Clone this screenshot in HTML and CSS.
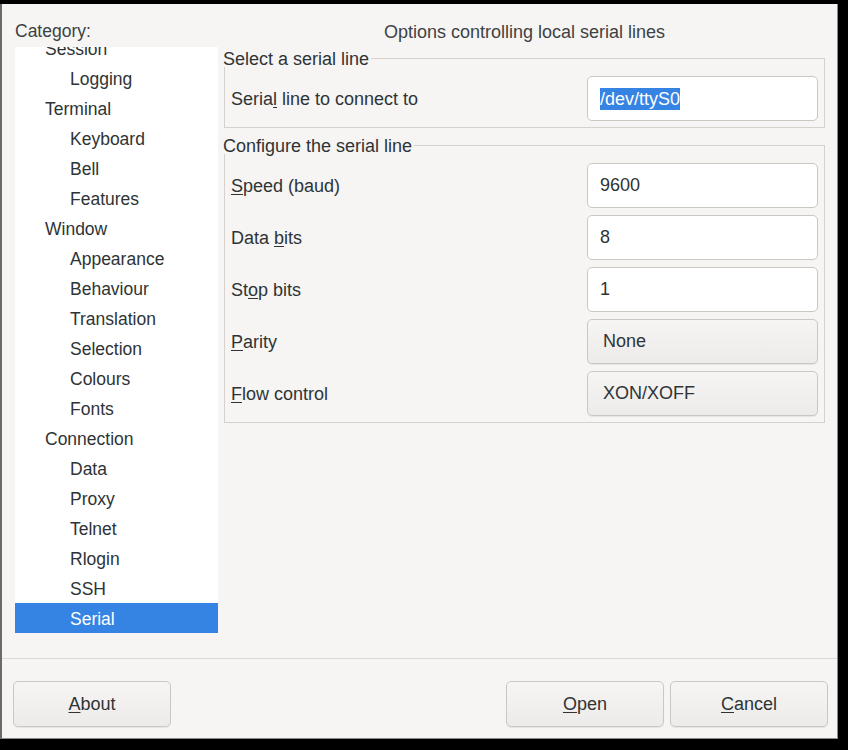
FILE: index.html
```html
<!DOCTYPE html>
<html>
  <head>
    <title>PuTTY Configuration - Serial</title>
    <link rel="stylesheet" href="styles.css">
  </head>

  <body>
    <div class="window">
      <div class="main">
        <div class="sidebar">
          <div class="cat-label">Category:</div>
          <div class="tree">
            <div class="tree-inner">
              <div class="node">Session</div>
              <div class="node sub">Logging</div>
              <div class="node">Terminal</div>
              <div class="node sub">Keyboard</div>
              <div class="node sub">Bell</div>
              <div class="node sub">Features</div>
              <div class="node">Window</div>
              <div class="node sub">Appearance</div>
              <div class="node sub">Behaviour</div>
              <div class="node sub">Translation</div>
              <div class="node sub">Selection</div>
              <div class="node sub">Colours</div>
              <div class="node sub">Fonts</div>
              <div class="node">Connection</div>
              <div class="node sub">Data</div>
              <div class="node sub">Proxy</div>
              <div class="node sub">Telnet</div>
              <div class="node sub">Rlogin</div>
              <div class="node sub">SSH</div>
              <div class="node sub selected">Serial</div>
            </div>
          </div>
        </div>

        <div class="panel">
          <div class="panel-title">Options controlling local serial lines</div>

          <div class="frame">
            <div class="frame-head">
              <span class="frame-label">Select a serial line</span>
              <span class="rule"></span>
            </div>
            <div class="frame-body">
              <div class="row">
                <label>Seria<u>l</u> line to connect to</label>
                <div class="entry"><span class="sel">/dev/ttyS0</span></div>
              </div>
            </div>
          </div>

          <div class="frame">
            <div class="frame-head">
              <span class="frame-label">Configure the serial line</span>
              <span class="rule"></span>
            </div>
            <div class="frame-body">
              <div class="row">
                <label><u>S</u>peed (baud)</label>
                <div class="entry">9600</div>
              </div>
              <div class="row">
                <label>Data <u>b</u>its</label>
                <div class="entry">8</div>
              </div>
              <div class="row">
                <label>St<u>o</u>p bits</label>
                <div class="entry">1</div>
              </div>
              <div class="row">
                <label><u>P</u>arity</label>
                <div class="combo">None</div>
              </div>
              <div class="row">
                <label><u>F</u>low control</label>
                <div class="combo">XON/XOFF</div>
              </div>
            </div>
          </div>
        </div>
      </div>

      <div class="actions">
        <button><u>A</u>bout</button>
        <div class="spacer"></div>
        <button><u>O</u>pen</button>
        <button><u>C</u>ancel</button>
      </div>
    </div>
  </body>
</html>
```

FILE: styles.css
```css
/* dialog */
body {
  margin: 0;
  background: #000;
  font-family: "Liberation Sans", Arial, sans-serif;
  font-size: 18px;
  color: #2e3436;
}

u {
  text-decoration: underline;
  text-underline-offset: 2px;
}

.window {
  margin-top: 4px;
  width: 835px;
  height: 734px;
  background: #f6f5f4;
  border-left: 2px solid #6a6a6a;
  border-right: 1px solid #8a8a8a;
  border-bottom: 1px solid #8a8a8a;
  display: flex;
  flex-direction: column;
}

.main {
  display: flex;
  gap: 6px;
  padding: 17px 12px 0 13px;
  height: 637px;
  border-bottom: 1px solid #dcd8d4;
}

.sidebar {
  width: 203px;
}

.cat-label {
  font-size: 17.5px;
  line-height: 21px;
  margin-bottom: 5px;
  color: #3d4244;
}

.tree {
  background: #fff;
  height: 586px;
  overflow: hidden;
}

.tree-inner {
  margin-top: -14px;
}

.node {
  font-size: 17.5px;
  height: 30px;
  line-height: 32px;
  padding-left: 30px;
}

.node.sub {
  padding-left: 55px;
}

.node.selected {
  background: #3584e4;
  color: #fff;
}

.panel {
  width: 601px;
}

.panel-title {
  line-height: 22px;
  text-align: center;
  margin-bottom: 6px;
  color: #3d4244;
}

.frame {
  margin-bottom: 8px;
}

.frame-head {
  display: flex;
  height: 18px;
  line-height: 20px;
}

.frame-label {
  margin-left: -1px;
  padding-right: 2px;
}

.rule {
  flex: 1;
  margin-top: 9px;
  border-top: 1px solid #d6d1cd;
  border-right: 1px solid #d6d1cd;
}

.frame-body {
  border: 1px solid #d6d1cd;
  border-top: none;
  padding: 9px 6px 6px 6px;
  display: flex;
  flex-direction: column;
  gap: 7px;
}

.row {
  display: flex;
  align-items: center;
  justify-content: space-between;
  height: 45px;
}

.row label {
  padding-top: 2px;
}

.entry,
.combo {
  width: 231px;
  height: 45px;
  box-sizing: border-box;
  border: 1px solid #cdc7c2;
  border-radius: 5px;
  display: flex;
  align-items: center;
  padding-left: 12px;
}

.entry {
  background: #fff;
}

.combo {
  padding-left: 15px;
  background: linear-gradient(#f6f5f4, #edebe9);
  box-shadow: 0 1px 1px rgba(0, 0, 0, 0.07);
}

.sel {
  background: #3584e4;
  color: #fff;
  line-height: 22px;
}

.actions {
  display: flex;
  gap: 6px;
  padding: 22px 9px 0 11px;
}

.spacer {
  flex: 1;
}

button {
  width: 158px;
  height: 46px;
  border: 1px solid #cdc7c2;
  border-radius: 5px;
  background: linear-gradient(#f6f5f4, #edebe9);
  box-shadow: 0 1px 1px rgba(0, 0, 0, 0.07);
  font-family: "Liberation Sans", Arial, sans-serif;
  font-size: 18px;
  color: #2e3436;
  padding: 0;
}
```
